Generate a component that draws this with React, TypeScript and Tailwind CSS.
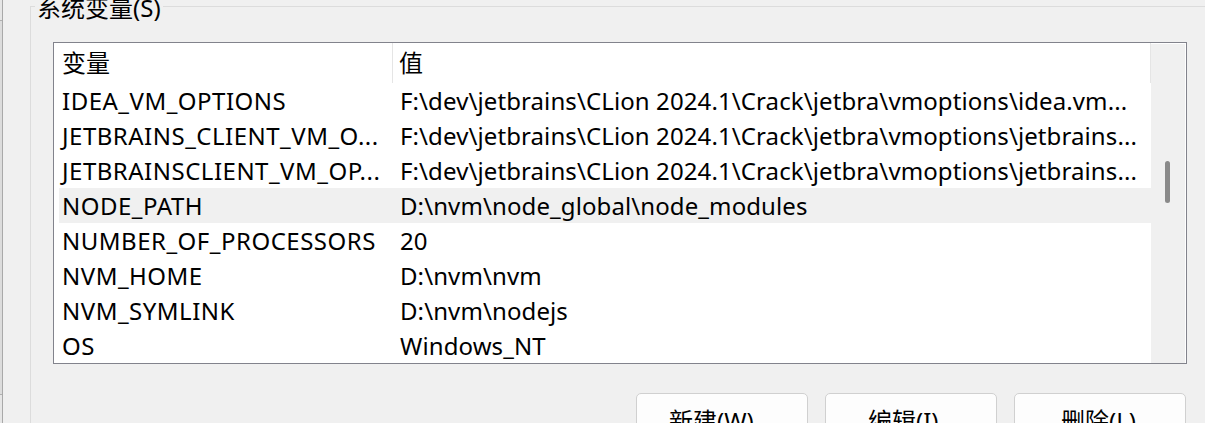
import React from "react";

const rows = [
  { name: "IDEA_VM_OPTIONS", value: "F:\\dev\\jetbrains\\CLion 2024.1\\Crack\\jetbra\\vmoptions\\idea.vm..." },
  { name: "JETBRAINS_CLIENT_VM_O...", value: "F:\\dev\\jetbrains\\CLion 2024.1\\Crack\\jetbra\\vmoptions\\jetbrains..." },
  { name: "JETBRAINSCLIENT_VM_OP...", value: "F:\\dev\\jetbrains\\CLion 2024.1\\Crack\\jetbra\\vmoptions\\jetbrains..." },
  { name: "NODE_PATH", value: "D:\\nvm\\node_global\\node_modules", selected: true },
  { name: "NUMBER_OF_PROCESSORS", value: "20" },
  { name: "NVM_HOME", value: "D:\\nvm\\nvm" },
  { name: "NVM_SYMLINK", value: "D:\\nvm\\nodejs" },
  { name: "OS", value: "Windows_NT" },
];

const buttons = [
  { label: "新建(W)", pad: "pl-[32px]" },
  { label: "编辑(I)", pad: "pl-[42px]" },
  { label: "删除(L)", pad: "pl-[46px]" },
];

const App = () => {
  return (
    <div className="w-[1205px] h-[423px] overflow-hidden bg-[#f0f0f0] flex text-black text-[24px] font-['Noto_Sans','Noto_Sans_CJK_SC',sans-serif]">
      {/* left edge of neighbouring panel */}
      <div className="w-[3px] h-full flex flex-col border-r border-[#a9a9a9]">
        <div className="h-[20px] bg-[#e6e6e6]" />
        <div className="h-[374px] bg-[#dcdcdc] border-t border-[#b0b0b0]" />
        <div className="flex-1 bg-[#e6e6e6] border-t border-[#b0b0b0]" />
      </div>

      {/* group box */}
      <div className="relative ml-[27px] mt-[6px] flex-1 border-l border-t border-[#dcdcdc] flex flex-col">
        <div className="absolute left-[4px] top-[-11px] px-[2px] bg-[#f0f0f0] leading-[24px] whitespace-nowrap">
          系统变量(S)
        </div>

        {/* list view */}
        <div className="ml-[22px] mt-[35px] w-[1134px] h-[322px] border border-[#82838c] bg-white flex">
          <div className="flex-1 pl-[5px] flex flex-col min-w-0">
            <div className="h-[40px] flex items-center">
              <div className="w-[334px] h-full pl-[3px] leading-[40px] border-r border-[#e5e5e5]">变量</div>
              <div className="flex-1 h-full pl-[6px] leading-[40px] border-r border-[#e5e5e5]">值</div>
            </div>
            {rows.map((r) => (
              <div
                key={r.name}
                className={`h-[35px] flex leading-[35px] whitespace-nowrap ${r.selected ? "bg-[#f0f0f0]" : ""}`}
              >
                <div className="w-[334px] pl-[3px] overflow-hidden tracking-[0.5px]">{r.name}</div>
                <div className="flex-1 pl-[7px] overflow-hidden tracking-[0.1px]">{r.value}</div>
              </div>
            ))}
          </div>
          {/* scrollbar */}
          <div className="w-[35px] bg-[#f0f0f0] border-t border-r border-white flex flex-col">
            <div className="mt-[117px] ml-[14px] w-[5px] h-[42px] rounded-full bg-[#8a8a8a]" />
          </div>
        </div>

        {/* buttons */}
        <div className="w-[1134px] ml-[22px] mt-[29px] pr-[1px] flex justify-end gap-[17px]">
          {buttons.map((b) => (
            <div
              key={b.label}
              className={`w-[172px] h-[46px] shrink-0 rounded-[5px] border border-[#d0d0d0] bg-[#fdfdfd] pt-[15px] leading-[24px] whitespace-nowrap ${b.pad}`}
            >
              {b.label}
            </div>
          ))}
        </div>
      </div>
    </div>
  );
};

export default App;
